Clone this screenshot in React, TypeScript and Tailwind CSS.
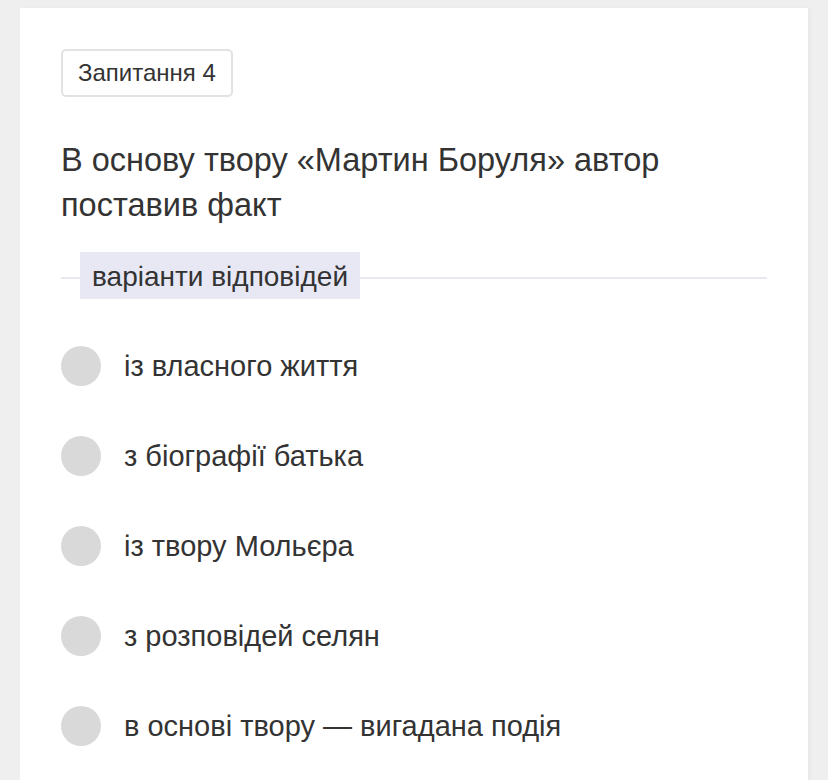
export default function App() {
  const options = [
    "із власного життя",
    "з біографії батька",
    "із твору Мольєра",
    "з розповідей селян",
    "в основі твору — вигадана подія",
  ];
  return (
    <div className="min-h-[780px] bg-[#efefef] pt-[8px] pl-[20px] pr-[20px]" style={{ fontFamily: '"Liberation Sans", Arial, sans-serif' }}>
      <div className="w-[788px] min-h-[772px] bg-white px-[41px] pt-[41px] text-[#333333] shadow-[2px_0_4px_rgba(0,0,0,0.04)]">
        <div className="inline-flex h-[48px] items-center rounded-[5px] border-2 border-[#e2e2e2] px-[15px] text-[24px] text-[#333]">
          Запитання 4
        </div>
        <div className="mt-[41px] text-[32.5px] leading-[45px] text-[#333]">
          В основу твору «Мартин Боруля» автор
          <br />
          поставив факт
        </div>
        <div className="mt-[24px] flex items-start">
          <div className="mt-[25px] h-[2px] w-[19px] bg-[#e8e8f0]" />
          <div className="flex h-[47px] items-center bg-[#e8e8f5] px-[12px] pt-[2px] text-[28px] text-[#333]">
            варіанти відповідей
          </div>
          <div className="mt-[25px] h-[2px] flex-1 bg-[#e8e8f0]" />
        </div>
        <div className="mt-[22px] flex flex-col">
          {options.map((o) => (
            <div key={o} className="flex h-[90px] items-center gap-[23px]">
              <div className="h-[40px] w-[40px] shrink-0 rounded-full bg-[#d9d9d9]" />
              <div className="pt-[2px] text-[29px] text-[#333]">{o}</div>
            </div>
          ))}
        </div>
      </div>
    </div>
  );
}
